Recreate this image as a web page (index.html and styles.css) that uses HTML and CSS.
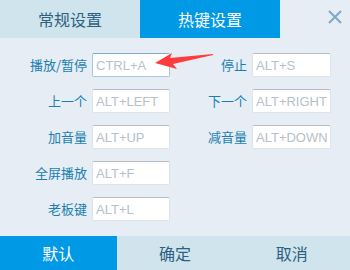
FILE: index.html
```html
<!DOCTYPE html>
<html lang="zh-CN">
<head>
  <meta charset="UTF-8">
  <title>热键设置</title>
  <link rel="stylesheet" href="styles.css">
</head>
<body>
  <div class="dialog">
    <!-- Tabs -->
    <div class="tabs">
      <div class="tab">常规设置</div>
      <div class="tab active">热键设置</div>
      <div class="close">
        <svg width="16" height="16" viewBox="0 0 16 16"><path d="M2 2 L14 14 M14 2 L2 14" stroke="#7fa8c6" stroke-width="2" fill="none"/></svg>
      </div>
    </div>

    <!-- Hotkeys -->
    <div class="hotkeys">
      <label>播放/暂停</label>
      <input class="focused" type="text" placeholder="CTRL+A">
      <label>停止</label>
      <input type="text" placeholder="ALT+S">

      <label>上一个</label>
      <input type="text" placeholder="ALT+LEFT">
      <label>下一个</label>
      <input type="text" placeholder="ALT+RIGHT">

      <label>加音量</label>
      <input type="text" placeholder="ALT+UP">
      <label>减音量</label>
      <input type="text" placeholder="ALT+DOWN">

      <label>全屏播放</label>
      <input type="text" placeholder="ALT+F">
      <span></span><span></span>

      <label>老板键</label>
      <input type="text" placeholder="ALT+L">

      <svg class="arrow" width="60" height="20" viewBox="0 0 60 20">
        <polygon points="0,11 17,1 15,6 58,2 58,3 18,12 22,17" fill="#ff3b3b"/>
      </svg>
    </div>

    <!-- Buttons -->
    <div class="footer">
      <div class="btn primary">默认</div>
      <div class="btn">确定</div>
      <div class="btn">取消</div>
    </div>
  </div>
</body>
</html>
```

FILE: styles.css
```css
:root {
  --blue: #0099e5;
  --light: #cfe4ec;
  --bg: #e6edf4;
  --label: #1b7fae;
  --dark-text: #2d5f80;
}

body {
  margin: 0;
  font-family: "Noto Sans CJK SC", "Liberation Sans", sans-serif;
}

.dialog {
  width: 350px;
  height: 270px;
  background: var(--bg);
  display: flex;
  flex-direction: column;
}

.tabs {
  display: flex;
  height: 38px;
}

.tab {
  width: 140px;
  display: flex;
  align-items: center;
  justify-content: center;
  font-size: 16px;
  color: var(--dark-text);
  background: var(--light);
}

.tab.active {
  background: var(--blue);
  color: #fff;
}

.close {
  flex: 1;
  display: flex;
  justify-content: flex-end;
  align-items: center;
  padding-right: 7px;
  padding-bottom: 4px;
}

.hotkeys {
  position: relative;
  display: grid;
  grid-template-columns: 90px 80px 80px 81px;
  row-gap: 12px;
  padding-top: 15px;
}

.hotkeys label {
  font-size: 13px;
  color: var(--label);
  text-align: right;
  line-height: 24px;
  padding-right: 3px;
}

.hotkeys input {
  box-sizing: border-box;
  width: calc(100% - 2px);
  height: 24px;
  margin: 0 0 0 2px;
  padding: 0 3px;
  border: 1px solid #dfe3e8;
  border-top-color: #b7bcc2;
  border-radius: 2px;
  background: #fff;
  font-family: "Liberation Sans", sans-serif;
  font-size: 13px;
  outline: none;
}

.hotkeys input.focused {
  border-color: #a9c9de;
  border-top-color: #7fa9c6;
}

.hotkeys input::placeholder {
  color: #b6c1ca;
}

.arrow {
  position: absolute;
  left: 155px;
  top: 14px;
}

.footer {
  margin-top: auto;
  display: flex;
  height: 34px;
}

.btn {
  flex: 1;
  display: flex;
  align-items: center;
  justify-content: center;
  font-size: 16px;
  color: var(--dark-text);
  background: var(--light);
}

.btn.primary {
  background: var(--blue);
  color: #fff;
}
```
